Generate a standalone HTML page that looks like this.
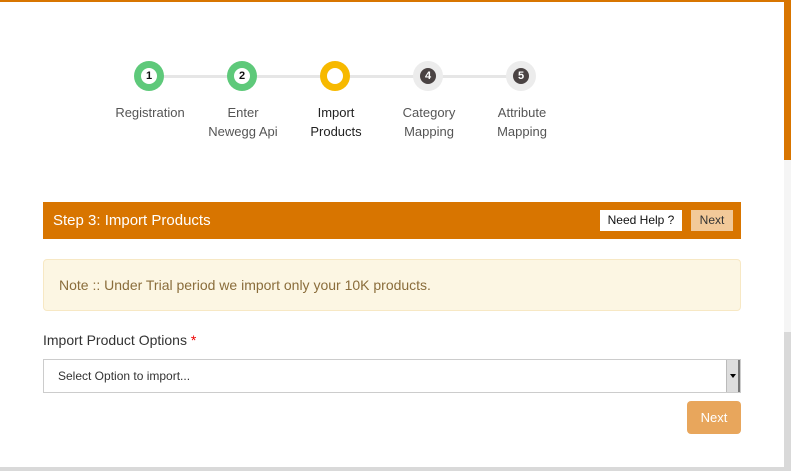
<!DOCTYPE html>
<html><head><style>
*{margin:0;padding:0;box-sizing:border-box}
body{width:791px;height:471px;background:#d9d9d9;font-family:"Liberation Sans",sans-serif;position:relative;overflow:hidden}
.panel{position:absolute;left:0;top:0;width:784px;height:467px;background:#fff;border-top:2px solid #d87500}
.sb1{position:absolute;left:784px;top:0;width:7px;height:160px;background:#d87500}
.sb2{position:absolute;left:784px;top:160px;width:7px;height:172px;background:#f5f5f5}
.line{position:absolute;left:149px;top:75px;width:372px;height:3px;background:#e6e6e6}
.c{position:absolute;top:61px;width:30px;height:30px;border-radius:50%}
.c i{position:absolute;left:7px;top:7px;width:16px;height:16px;border-radius:50%;font-style:normal;font-size:11px;font-weight:bold;text-align:center;line-height:16px}
.g{background:#5ec97a}.g i{background:#fff;color:#111}
.y{background:#f7b900}.y i{background:#fff}
.n{background:#ececec}.n i{background:#4a4343;color:#fff}
.lb{position:absolute;top:103px;width:100px;text-align:center;font-size:13px;line-height:19px;color:#555}
.bar{position:absolute;left:43px;top:202px;width:698px;height:37px;background:#d87500;color:#fff;font-size:15px;line-height:37px;padding-left:10px}
.help{position:absolute;left:600px;top:210px;width:82px;height:21px;background:#fff;color:#111;font-size:12px;line-height:21px;text-align:center}
.nx{position:absolute;left:691px;top:210px;width:42px;height:21px;background:#f2c999;color:#333;font-size:12px;line-height:21px;text-align:center}
.note{position:absolute;left:43px;top:259px;width:698px;height:52px;background:#fcf6e3;border:1px solid #f7e8c4;border-radius:4px;color:#8a6d3b;font-size:14px;line-height:50px;padding-left:15px}
.lab{position:absolute;left:43px;top:332px;font-size:14px;color:#333}
.sel{position:absolute;left:43px;top:359px;width:698px;height:34px;border:1px solid #ccc;font-size:12px;line-height:32px;padding-left:14px;color:#333}
.arr{position:absolute;right:0;top:0;width:14px;height:32px;background:#ddd;border-left:1px solid #bbb;border-right:2px solid #777}
.arr:after{content:"";position:absolute;left:3px;top:14px;border:3px solid transparent;border-top:4px solid #000}
.btn{position:absolute;left:687px;top:401px;width:54px;height:33px;background:#e8a65c;border-radius:4px;color:#fff;font-size:13px;line-height:33px;text-align:center}
</style></head><body>
<div class="panel"></div>
<div class="sb1"></div><div class="sb2"></div>
<div class="line"></div>
<div class="c g" style="left:134px"><i>1</i></div>
<div class="c g" style="left:227px"><i>2</i></div>
<div class="c y" style="left:320px"><i></i></div>
<div class="c n" style="left:413px"><i>4</i></div>
<div class="c n" style="left:506px"><i>5</i></div>
<div class="lb" style="left:100px">Registration</div>
<div class="lb" style="left:193px">Enter<br>Newegg Api</div>
<div class="lb" style="left:286px;color:#222">Import<br>Products</div>
<div class="lb" style="left:379px">Category<br>Mapping</div>
<div class="lb" style="left:472px">Attribute<br>Mapping</div>
<div class="bar">Step 3: Import Products</div>
<div class="help">Need Help ?</div>
<div class="nx">Next</div>
<div class="note">Note :: Under Trial period we import only your 10K products.</div>
<div class="lab">Import Product Options <span style="color:#e00">*</span></div>
<div class="sel">Select Option to import...<div class="arr"></div></div>
<div class="btn">Next</div>
</body></html>
